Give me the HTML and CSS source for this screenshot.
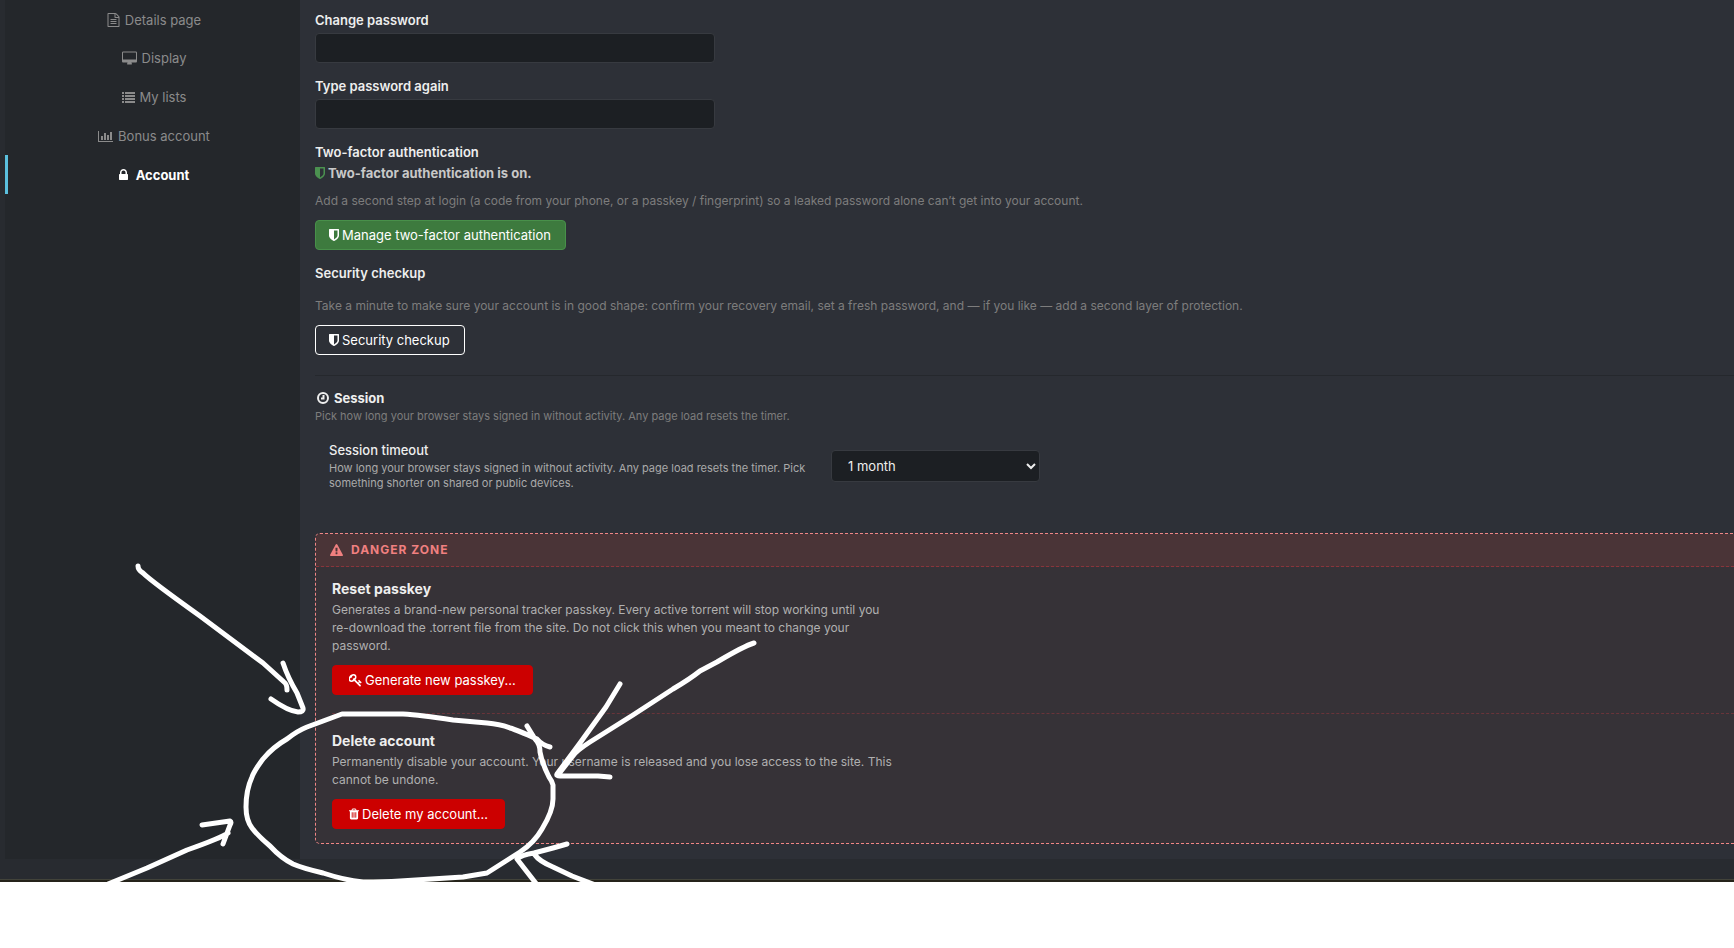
FILE: index.html
```
<!DOCTYPE html>
<html lang="en">
<head>
<meta charset="utf-8">
<title>Account settings</title>
<link rel="stylesheet" href="styles.css">
</head>
<body>
<svg class="symbols" aria-hidden="true">
  <symbol id="shield" viewBox="256 128 1280 1536"><path d="M1344 960v-640h-448v1137q119-63 213-137 235-184 235-360zm192-768v768q0 86-33.500 170.500t-83 150-118 127.500-126.500 103-121 77.500-89.500 49.500-42.500 20q-12 6-26 6t-26-6q-16-7-42.500-20t-89.500-49.500-121-77.500-126.500-103-118-127.500-83-150-33.500-170.500v-768q0-26 19-45t45-19h1152q26 0 45 19t19 45z"/></symbol>
</svg>
<div class="page">
  <div class="settings">
    <nav class="sidebar">
      <a class="tab" href="#details"><svg class="icon" viewBox="128 0 1536 1792"><path d="M1596 380q28 28 48 76t20 88v1152q0 40-28 68t-68 28h-1344q-40 0-68-28t-28-68v-1600q0-40 28-68t68-28h896q40 0 88 20t76 48zm-444-244v376h376q-10-29-22-41l-313-313q-12-12-41-22zm384 1528v-1024h-416q-40 0-68-28t-28-68v-416h-768v1536h1280zm-1024-864q0-14 9-23t23-9h704q14 0 23 9t9 23v64q0 14-9 23t-23 9h-704q-14 0-23-9t-9-23v-64zm736 224q14 0 23 9t9 23v64q0 14-9 23t-23 9h-704q-14 0-23-9t-9-23v-64q0-14 9-23t23-9h704zm0 256q14 0 23 9t9 23v64q0 14-9 23t-23 9h-704q-14 0-23-9t-9-23v-64q0-14 9-23t23-9h704z"/></svg>Details page</a>
      <a class="tab" href="#display"><svg class="icon wide" viewBox="-64 -64 1920 1792"><path fill-rule="evenodd" d="M1728 992v-832q0-32-32-32h-1600q-32 0-32 32v832q0 32 32 32h1600q32 0 32-32zm128-832v1088q0 66-47 113t-113 47h-544q0 37 16 77t32 71 16 44q0 26-19 45t-45 19h-512q-26 0-45-19t-19-45q0-14 16-44t32-70 16-78h-544q-66 0-113-47t-47-113v-1088q0-66 47-113t113-47h1600q66 0 113 47t47 113z"/></svg>Display</a>
      <a class="tab" href="#lists"><svg class="icon" viewBox="0 0 13 14"><path d="M0 2h2v2H0zM0 5h2v2H0zM0 8h2v2H0zM0 11h2v2H0zM3 2h10v2H3zM3 5h10v2H3zM3 8h10v2H3zM3 11h10v2H3z"/></svg>My lists</a>
      <a class="tab" href="#bonus"><svg class="icon wide" viewBox="0 0 15 14"><path d="M0 2h1v10h14v1H0zM3 7h2v4H3zM6 4h2v7H6zM9 6h2v5H9zM12 3h2v8h-2z"/></svg>Bonus account</a>
      <a class="tab active" href="#account" aria-current="page"><svg class="icon narrow" viewBox="320 128 1152 1536"><path d="M640 768h512v-192q0-106-75-181t-181-75-181 75-75 181v192zm832 96v576q0 40-28 68t-68 28h-960q-40 0-68-28t-28-68v-576q0-40 28-68t68-28h32v-192q0-184 132-316t316-132 316 132 132 316v192h32q40 0 68 28t28 68z"/></svg>Account</a>
    </nav>
    <main class="content">
      <div class="field"><label for="password">Change password</label><input id="password" type="password"></div>
      <div class="field"><label for="repeat">Type password again</label><input id="repeat" type="password"></div>
      <section class="security">
        <h2>Two-factor authentication</h2>
        <p class="status"><svg class="shield"><use href="#shield"/></svg>Two-factor authentication is on.</p>
        <p class="muted">Add a second step at login (a code from your phone, or a passkey / fingerprint) so a leaked password alone can’t get into your account.</p>
        <button class="button success" type="button"><svg class="shield"><use href="#shield"/></svg>Manage two-factor authentication</button>
      </section>
      <section class="checkup">
        <h2>Security checkup</h2>
        <p class="muted">Take a minute to make sure your account is in good shape: confirm your recovery email, set a fresh password, and — if you like — add a second layer of protection.</p>
        <button class="button outline" type="button"><svg class="shield"><use href="#shield"/></svg>Security checkup</button>
      </section>
      <section class="session">
        <h2><svg class="clock" viewBox="0 0 12 12"><circle cx="6" cy="6" r="5"/><path d="M6.500 3v3.500H4"/></svg>Session</h2>
        <p class="hint">Pick how long your browser stays signed in without activity. Any page load resets the timer.</p>
        <div class="row">
          <div class="row-text">
            <label for="timeout">Session timeout</label>
            <p>How long your browser stays signed in without activity. Any page load resets the timer. Pick something shorter on shared or public devices.</p>
          </div>
          <select id="timeout"><option>1 month</option></select>
        </div>
      </section>
      <section class="danger">
        <h2><svg class="warning" viewBox="0 0 1792 1664"><path d="M1024 1375v-190q0-14-9-23t-23-10h-192q-13 0-23 10t-9 23v190q0 14 9 23t23 10h192q13 0 23-10t9-23zm-2-374l18-459q0-12-10-19-13-11-24-11h-220q-11 0-24 11-10 7-10 21l17 457q0 10 10 16t24 7h185q14 0 23-7t11-16zm-14-934l768 1408q35 63-2 126-17 29-46 46t-64 17h-1536q-34 0-63-17t-47-46q-37-63-2-126l768-1408q17-31 47-49t65-18 65 18 47 49z"/></svg>Danger zone</h2>
        <div class="action">
          <h3>Reset passkey</h3>
          <p>Generates a brand-new personal tracker passkey. Every active torrent will stop working until you re-download the .torrent file from the site. Do not click this when you meant to change your password.</p>
          <button class="button critical" type="button"><svg class="key" viewBox="64 128 1664 1664"><path d="M832 512q0-80-56-136t-136-56-136 56-56 136q0 42 19 83-41-19-83-19-80 0-136 56t-56 136 56 136 136 56 136-56 56-136q0-42-19-83 41 19 83 19 80 0 136-56t56-136zm851 704q0 17-49 66t-66 49q-9 0-28-16t-37-33-38-40-25-26l-96 96 220 220q28 28 28 68 0 42-39 81t-81 39q-40 0-68-28l-671-671q-176 131-365 131-163 0-265-102t-103-266q0-160 95-313t248-248 313-95q163 0 265 103t103 265q0 189-131 365l355 355 96-96q-3-3-26-24t-40-39-33-36-16-29q0-17 49-66t66-49q13 0 23 10 6 6 46 44t82 80 86 86 73 78 29 41z"/></svg>Generate new passkey...</button>
        </div>
        <div class="action">
          <h3>Delete account</h3>
          <p>Permanently disable your account. Your username is released and you lose access to the site. This cannot be undone.</p>
          <button class="button critical" type="button"><svg class="shield" viewBox="192 128 1408 1536"><path d="M704 1376v-704q0-14-9-23t-23-9h-64q-14 0-23 9t-9 23v704q0 14 9 23t23 9h64q14 0 23-9t9-23zm256 0v-704q0-14-9-23t-23-9h-64q-14 0-23 9t-9 23v704q0 14 9 23t23 9h64q14 0 23-9t9-23zm256 0v-704q0-14-9-23t-23-9h-64q-14 0-23 9t-9 23v704q0 14 9 23t23 9h64q14 0 23-9t9-23zm-544-992h448l-48-117q-7-9-17-11h-317q-10 2-17 11zm928 32v64q0 14-9 23t-23 9h-96v948q0 83-47 143t-113 61h-832q-66 0-113-58t-47-142v-952h-96q-14 0-23-9t-9-23v-64q0-14 9-23t23-9h309l70-167q15-37 54-63t79-26h320q40 0 79 26t54 63l70 167h309q14 0 23 9t9 23z"/></svg>Delete my account...</button>
        </div>
      </section>
    </main>
  </div>
  <div class="edge"></div>
  <svg class="ink" aria-hidden="true">
    <path d="M138 566Q138 570 143 573Q151 581 200 616L263 663L284 682Q287 684 287 690M283 663Q288 678 297 693L303 708Q304 712 298 712Q288 711 271 699"/>
    <path d="M202 825L230 821Q232 822 230 825L223 844M228 833Q221 838 187 850L147 868L108 884"/>
    <path d="M550 747Q542 745 537 739Q517 730 510 728Q500 724 487 723L453 720Q420 715 403 714H342L307 727Q297 731 287 739Q273 747 263 759Q254 771 252 777Q246 790 246 807Q246 820 252 828Q258 836 270 846Q281 858 293 864Q302 868 323 873Q344 880 363 882Q384 882 400 881L463 877L487 873L520 852Q534 843 542 829Q553 811 553 799V785Q552 781 549 777Q542 763 540 752Q540 744 535 739L527 726"/>
    <path d="M754 643Q744 646 717 662L700 671Q690 679 673 689L633 715L590 742Q576 751 572 757L558 775M620 684L606 707L580 743L557 774Q556 776 560 776L598 776L610 777"/>
    <path d="M567 844L553 848L534 853Q521 855 517 859L538 886M535 855Q539 861 553 867L572 876L598 886"/>
  </svg>
</div>
</body>
</html>
```
FILE: styles.css
```
* { box-sizing: border-box; }
body { margin: 0; background: #fff; color: #eee; font: 13px/20px Inter, sans-serif; }
h2, h3, p { margin: 0; }
input, select, button { font: inherit; }
.symbols { display: none; }
svg { fill: currentColor; flex: none; }

.page { position: relative; overflow: hidden; background: #282b30; }
.settings { display: grid; grid-template-columns: 295px minmax(0, 1fr); padding: 0 0 20px 5px; }
.edge { height: 3px; background: #25231a; border-top: 1px solid #42433a; }

.sidebar { background: #24272b; }
.tab { display: flex; align-items: center; justify-content: center; gap: 5px; height: 39px; border-left: 3px solid transparent; color: #8b8b8b; text-decoration: none; }
.tab:first-child { height: 38px; padding-top: 1px; }
.tab.active { border-color: #5bc0de; color: #fff; font-weight: 700; gap: 8px; }
.icon { width: 13px; height: 14px; }
.icon.wide { width: 15px; }
.icon.narrow { width: 9px; height: 12px; }

.content { padding: 10px 0 15px 15px; background: #2d3037; }
h2, .field label { display: block; font-size: 13px; line-height: 20px; font-weight: 600; }
.field { margin-bottom: 13px; }
.field label { margin-bottom: 3px; }
.field input { display: block; width: 400px; max-width: 100%; height: 30px; padding: 4px 12px; color: #eee; background: #1c1f23; border: 1px solid #373a40; border-radius: 4px; }
.status { display: flex; align-items: center; gap: 3px; margin-top: 1px; font-weight: 700; color: #c8c8c8; }
.status svg { color: #4b9150; }
.shield { width: 10px; height: 12px; }
.muted { font-size: 12px; color: #7d7d7d; }
.security .muted { margin: 8px 0 9px; }
.checkup h2 { margin-top: 13px; }
.checkup .muted { margin: 13px 0 9px; }
.button { display: flex; align-items: center; gap: 3px; height: 30px; padding: 0 14px 0 13px; color: #fff; border: 1px solid; border-radius: 4px; white-space: nowrap; }
.success { background: #3d7a3e; border-color: #48904a; }
.outline { background: transparent; border-color: #fff; }
.critical { background: #c00; border-color: #c00; padding: 0 16px; }
.key { width: 13px; height: 13px; }

.session { margin-top: 20px; padding-top: 12px; border-top: 1px solid #25282d; }
.session h2 { display: flex; align-items: center; gap: 5px; padding-left: 2px; font-weight: 700; }
.clock { width: 12px; height: 12px; fill: none; stroke: currentColor; stroke-width: 2; }
.hint { font-size: 11px; line-height: 16px; color: #7d7d7d; }
.row { display: flex; align-items: center; gap: 16px; padding: 16px 14px 18px; }
.row-text { width: 486px; }
.row-text label { display: block; line-height: 20px; font-weight: 500; }
.row-text p { margin-top: 1px; font-size: 11px; line-height: 15px; color: #aaa; }
select { width: 209px; height: 32px; padding: 0 12px; color: #eee; background: #1c1f23; border: 1px solid #373a40; border-radius: 4px; }

.danger { margin-top: 24px; border: 1px dashed #f08686; border-right: 0; border-radius: 5px 0 0 5px; background: #363237; }
.danger h2 { display: flex; align-items: center; gap: 8px; height: 33px; padding-left: 14px; color: #f08080; background: #4a3437; border-bottom: 1px dashed #8a343b; border-radius: 4px 0 0 0; font-size: 12px; font-weight: 700; letter-spacing: 1px; text-transform: uppercase; }
.warning { width: 13px; height: 12px; }
.action { margin: 0 16px; padding: 12px 0 18px; }
.action + .action { margin-right: 0; padding: 17px 0 14px; border-top: 1px dashed #69343a; }
.action h3 { font-size: 14px; line-height: 20px; font-weight: 700; }
.action p { max-width: 560px; margin: 2px 0 10px; font-size: 12px; line-height: 18px; color: #b0b0b0; }

/* hand-drawn strokes laid over the panels */
.ink { position: absolute; top: 0; left: 0; width: 100%; height: 100%; pointer-events: none; }
.ink path { fill: none; stroke: #fff; stroke-width: 5; stroke-linecap: round; stroke-linejoin: round; }
```
